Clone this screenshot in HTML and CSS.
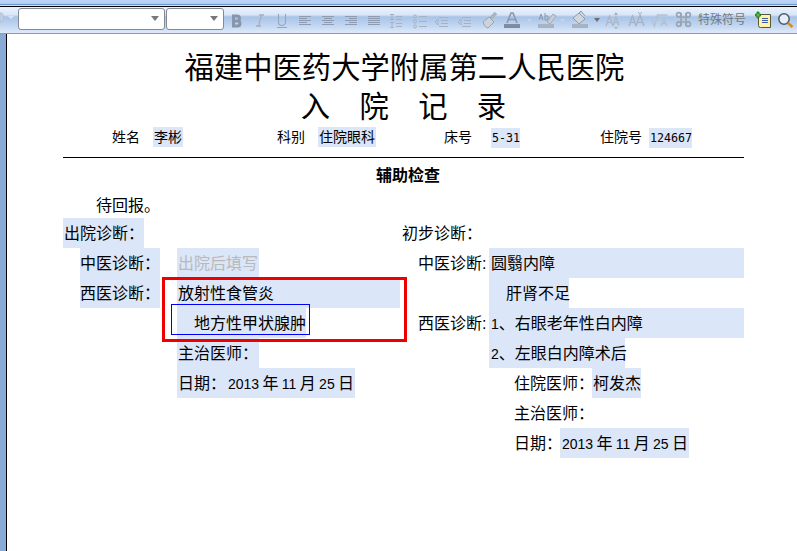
FILE: index.html
```html
<!DOCTYPE html>
<html lang="zh">
<head>
<meta charset="utf-8">
<title>入院记录</title>
<link rel="stylesheet" href="styles.css">
</head>
<body>
<div class="topband"></div>
<div class="toolbar">
  <svg class="grip" width="18" height="26" viewBox="0 0 18 26" fill="none">
    <path d="M0 6h1a2 2 0 0 1 2 2v5a2 2 0 0 1-2 2H0z" fill="#c3d3e8" stroke="#b0bfd2"/>
    <path d="M8 9h6l-3 3z" fill="#d9e5f4"/>
  </svg>
  <div class="combo combo-font"><span class="caret"></span></div>
  <div class="combo combo-size"><span class="caret"></span></div>
  <svg class="tools" width="573" height="26" viewBox="0 0 573 26" fill="none">
    <path d="M9.500 9h3.500a2.500 2.500 0 0 1 0 5H9.500zM9.500 14h4a2.500 2.500 0 0 1 0 5h-4z" stroke-width="3" stroke="#8796ab"/>
    <path d="M35 8h5M37.500 8l-3 11M32 19h5" stroke-width="1.300" stroke="#a5afbd"/>
    <path d="M54.500 7v8a3.500 3.500 0 0 0 7 0V7M53 20.500h10" stroke-width="1.100" stroke="#97a5b9"/>
    <g stroke="#8d9cb2" stroke-width="1">
      <path d="M75 9.500h12M75 11.500h8M75 13.500h12M75 15.500h8M75 17.500h12"/>
      <path d="M98 9.500h12M100 11.500h8M98 13.500h12M100 15.500h8M98 17.500h12"/>
      <path d="M121 9.500h12M125 11.500h8M121 13.500h12M125 15.500h8M121 17.500h12"/>
      <path d="M144 9.500h12M144 11.500h12M144 13.500h12M144 15.500h12M144 17.500h12"/>
      <path d="M166 7.500h4M168 7.500v5M166 12.500h4M166 15.500h4M168 15.500v5M166 20.500h4M172 9.500h6M172 12.500h6M172 16.500h6M172 19.500h6" stroke="#a6b2c2"/>
      <circle cx="191" cy="9.500" r="1.500" stroke="#a6b2c2"/><circle cx="191" cy="14.500" r="1.500" stroke="#a6b2c2"/><circle cx="191" cy="19.500" r="1.500" stroke="#a6b2c2"/>
      <path d="M195 9.500h8M195 14.500h8M195 19.500h8" stroke="#a6b2c2"/>
      <path d="M215 10.500h9M217 13.500h7M217 16.500h7M215 19.500h9M211 15l3-3v6z" stroke="#a6b2c2"/>
      <path d="M238 10.500h9M240 13.500h7M240 16.500h7M238 19.500h9M234 15l3-3v6z" stroke="#a6b2c2"/>
    </g>
    <path d="M272 6l-6 6" stroke="#aab4c0" stroke-width="3.500"/>
    <path d="M259 15l6-5 5 5-6 6c-2 0-4-3-5-6z" fill="#cdd3da" stroke="#97a3b3"/>
    <path d="M283 16l4-10h2l4 10M285 12.500h6" stroke="#8d99aa" stroke-width="1.700"/>
    <rect x="280" y="17" width="16" height="4" fill="#7f8ba0"/>
    <path d="M303 12h5l-2.500 3z" fill="#c5d5e9"/>
    <path d="M315 13l2-6 2 6M316 11h2M321 6v7M321 9h3v4h-3" stroke="#8d99aa"/>
    <path d="M323 15l6-8 3 2-6 8z" fill="#c8ced6" stroke="#a0aaba"/>
    <rect x="314" y="17" width="16" height="4" fill="#a8b2c0"/>
    <path d="M336 12h5l-2.500 3z" fill="#c5d5e9"/>
    <path d="M349 11l6-5 6 6-6 5zM355 6l2-2 4 5" fill="#d0d6dd" stroke="#8f9bab"/>
    <rect x="348" y="17" width="16" height="4" fill="#a8b2c0"/>
    <path d="M370 11h6l-3 4z" fill="#6d6d6d"/>
    <path d="M382 19l3.500-10 3.500 10M383.500 15.500h4M389 19l3-9 3 9M390 15.500h4" stroke="#adb6c3" stroke-width="1.200"/>
    <path d="M390 8l2-3 2 3zM390 20l2 2 2-2z" fill="#a5afbd"/>
    <path d="M405 19l3.500-10 3.500 10M406.500 15.500h4M412 19l4-11 4 11M414 15.500h4" stroke="#a5afbd" stroke-width="1.200"/>
    <path d="M414 5l2 2 2-2" stroke="#a5afbd"/>
    <path d="M428 13l2.500 6 3-11h10M437 19l3-7 3 7M438 16.500h4" stroke="#b6c0cc" stroke-width="1.300"/>
    <g stroke="#9aa5b3" stroke-width="1.700">
      <path d="M457 6v13M462 6v13M453 10h13M453 15h13"/>
      <circle cx="454.800" cy="7.800" r="2.200"/><circle cx="464.200" cy="7.800" r="2.200"/>
      <circle cx="454.800" cy="17.200" r="2.200"/><circle cx="464.200" cy="17.200" r="2.200"/>
    </g>
    <path d="M534.500 7.500h12v13h-10a2 2 0 0 1-2-2z" fill="#fff3a8" stroke="#57593a"/>
    <path d="M538 11.500h6M538 13.500h6M538 15.500h6" stroke="#3f5fa5"/>
    <path d="M531.500 9V7h1.500V5h2v2h1.500v2H535v2h-2V9z" fill="#43c337" stroke="#1e6a1a" stroke-width=".8"/>
    <circle cx="560" cy="12" r="5.200" fill="#e6eef7" stroke="#4a5a6a" stroke-width="1.500"/>
    <path d="M564 16l4.500 4" stroke="#d98a1e" stroke-width="2.500"/>
  </svg>
  <span class="special">特殊符号</span>
</div>
<div class="workspace">
  <div class="gutter"></div>
  <main class="page">
    <h1 class="title">福建中医药大学附属第二人民医院</h1>
    <h2 class="subtitle">入院记录</h2>
    <div class="patient">
      <span class="p-name">姓名<b class="fill">李彬</b></span>
      <span class="p-dept">科别<b class="fill">住院眼科</b></span>
      <span class="p-bed">床号<b class="fill mono">5-31</b></span>
      <span class="p-id">住院号<b class="fill mono">124667</b></span>
    </div>
    <div class="rule"></div>
    <div class="section">辅助检查</div>
    <p class="pending">待回报。</p>
    <div class="columns">
      <section class="col col-left">
        <div class="row"><span class="fill head">出院诊断：</span></div>
        <div class="row"><span class="fill label">中医诊断：</span><span class="fill val grey">出院后填写</span></div>
        <div class="row"><span class="fill label">西医诊断：</span><span class="fill val wide">放射性食管炎</span></div>
        <div class="row"><span class="indent"></span><span class="fill val second">地方性甲状腺肿</span></div>
        <div class="row"><span class="indent"></span><span class="fill val">主治医师：</span></div>
        <div class="row"><span class="indent"></span><span class="fill val">日期：<i class="num first">2013 </i>年<i class="num"> 11 </i>月<i class="num"> 25 </i>日</span></div>
        <div class="redbox"></div>
        <div class="bluebox"></div>
      </section>
      <section class="col col-right">
        <div class="row"><span class="plain">初步诊断：</span></div>
        <div class="row sub"><span class="rlabel">中医诊断:</span><span class="fill rval">圆翳内障</span></div>
        <div class="row sub"><span class="rlabel"></span><span class="fill rshort">肝肾不足</span></div>
        <div class="row sub"><span class="rlabel">西医诊断:</span><span class="fill rval"><i class="num">1</i>、右眼老年性白内障</span></div>
        <div class="row sub"><span class="rlabel"></span><span class="fill rmid"><i class="num">2</i>、左眼白内障术后</span></div>
        <div class="row sign"><span class="slabel">住院医师：</span><span class="fill doc">柯发杰</span></div>
        <div class="row sign"><span class="slabel">主治医师：</span></div>
        <div class="row sign"><span class="dlabel">日期：</span><span class="fill date"><i class="num">2013 </i>年<i class="num"> 11 </i>月<i class="num"> 25 </i>日</span></div>
      </section>
    </div>
  </main>
</div>
</body>
</html>
```

FILE: styles.css
```css
* { box-sizing: border-box; }
html, body { margin: 0; padding: 0; }
body {
  width: 797px;
  height: 551px;
  overflow: hidden;
  background: #fff;
  color: #000;
  font-family: "Liberation Sans", "Noto Sans CJK SC", sans-serif;
  font-size: 14px;
}
.topband {
  height: 7px;
  background: linear-gradient(#bcd6f6 0, #b0cdf2 4px, #6d94cf 4px, #6d94cf 5px, #d5e3f7 5px, #d5e3f7 6px, #000 6px, #000 7px);
}
.toolbar {
  position: relative;
  height: 27px;
  display: flex;
  align-items: center;
  border-bottom: 1px solid #7f9bc9;
  background: linear-gradient(#eaf2fd 0%, #d9e6f8 30%, #a9c4e8 38%, #c0d5f0 70%, #deeafa 100%);
}
.grip { flex: none; }
.combo {
  position: relative;
  height: 22px;
  margin-top: -2px;
  background: #fff;
  border: 1px solid #808a97;
  border-radius: 3px;
}
.combo-font { width: 147px; }
.combo-size { width: 58px; margin-left: 1px; }
.caret {
  position: absolute;
  top: 7px;
  right: 5px;
  width: 0;
  height: 0;
  border: 4px solid transparent;
  border-top: 5px solid #75797f;
  border-bottom: 0;
}
.tools { position: absolute; left: 224px; top: 0; }
.special {
  position: absolute;
  left: 698px;
  top: 3px;
  font-size: 12px;
  line-height: 20px;
  color: #74797f;
}
.workspace {
  display: flex;
  height: 517px;
}
.gutter {
  width: 7px;
  background: #8aaad6;
  border-right: 1px solid #000;
}
.page {
  position: relative;
  flex: 1;
  padding-left: 56px;
}
.title {
  margin: 0;
  width: 683px;
  padding-top: 14px;
  font-size: 29.33px;
  line-height: 34px;
  font-weight: 400;
  text-align: center;
  white-space: nowrap;
  font-family: "Noto Sans CJK SC", sans-serif;
}
.subtitle {
  margin: 0;
  width: 681px;
  font-size: 29.33px;
  line-height: 44px;
  font-weight: 400;
  letter-spacing: 29.33px;
  text-indent: 29.33px;
  text-align: center;
  font-family: "Noto Sans CJK SC", sans-serif;
}
.patient {
  display: flex;
  height: 20px;
  margin-top: 1px;
  line-height: 20px;
}
.patient b { font-weight: 400; margin-left: 13px; display: inline-block; padding: 0 1px; }
.patient .mono {
  font-family: "DejaVu Sans Mono", monospace;
  font-size: 11.67px;
  padding: 0 0 0 1px;
}
.p-name { margin-left: 49px; width: 165px; }
.p-dept { width: 167px; }
.p-bed { width: 156px; }
.p-bed b { margin-left: 19px; }
.patient .p-id b { margin-left: 7px; }
.fill { background: #dbe6f8; }
.rule {
  height: 1px;
  background: #000;
  width: 681px;
  margin-top: 10px;
}
.section {
  width: 690px;
  margin-top: 8px;
  text-align: center;
  font-weight: 700;
  line-height: 20px;
  font-size: 16px;
}
.pending {
  margin: 10px 0 0 33px;
  line-height: 20px;
  font-size: 16px;
}
.columns {
  display: flex;
  margin-top: 2px;
}
.col { position: relative; }
.col-left { width: 337px; }
.row {
  display: flex;
  height: 30px;
  line-height: 32px;
  font-size: 16px;
  white-space: pre;
}
.num {
  font-style: normal;
  font-size: 14px;
  word-spacing: -0.55px;
}
.num.first { margin-left: 2px; }
.head { padding-left: 1px; width: 81px; }
.label { margin-left: 17px; width: 80px; }
.val { margin-left: 17px; padding: 0 1px; height: 30px; }
.indent { width: 97px; }
.grey { color: #b9b9b9; }
.wide { width: 223px; }
.val.second { padding-left: 17px; width: 129px; }
.redbox {
  position: absolute;
  left: 99px;
  top: 59px;
  width: 245px;
  height: 65px;
  border: 3px solid #ee0000;
}
.bluebox {
  position: absolute;
  left: 108px;
  top: 86px;
  width: 139px;
  height: 31px;
  border: 1px solid #0000ff;
}
.plain { padding-left: 2px; }
.sub .rlabel { display: block; width: 71px; margin-left: 18px; }
.sub .fill { padding-left: 2px; }
.sub .rval { width: 255px; }
.sub .rshort { width: 80px; padding-left: 17px; }
.sub .rmid { width: 136px; }
.sign { padding-left: 114px; }
.slabel { width: 78px; }
.doc { width: 49px; padding-left: 1px; }
.dlabel { width: 46px; }
.date { width: 129px; padding-left: 2px; }
```
